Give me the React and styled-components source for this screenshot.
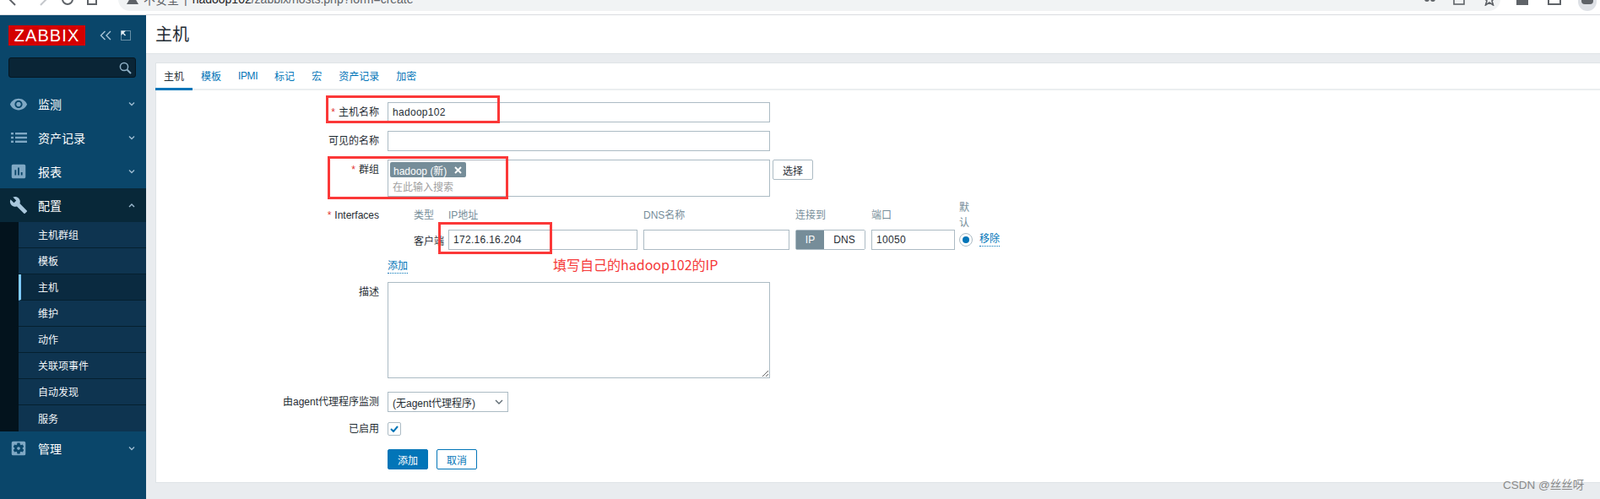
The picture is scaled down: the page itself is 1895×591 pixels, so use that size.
import React from "react";
import styled, { createGlobalStyle } from "styled-components";
import { MdVisibility, MdBuild, MdSettingsApplications, MdAssessment } from "react-icons/md";

const FONT = `"Liberation Sans", Arial, "Noto Sans CJK SC", sans-serif`;

const Global = createGlobalStyle`
  html, body { margin: 0; padding: 0; background: #e9ecef; }
  * { box-sizing: border-box; }
  body { font-family: ${FONT}; font-size: 12px; color: #1f2c33; }
`;

const Page = styled.div`
  position: relative;
  width: 1895px;
  height: 591px;
  overflow: hidden;
  display: flex;
  flex-direction: column;
`;

/* browser chrome */
const Chrome = styled.div`
  flex: none;
  height: 18px;
  background: #fff;
  border-bottom: 1px solid #dadce0;
  overflow: hidden;
`;
const ChromeRow = styled.div`
  height: 28px;
  margin-top: -15px;
  display: flex;
  align-items: center;
  color: #5f6368;
`;
const NavIcons = styled.div`
  width: 140px;
  flex: none;
  display: flex;
  align-items: center;
  padding-left: 8px;
  gap: 14px;
`;
const AddressPill = styled.div`
  width: 1637px;
  height: 28px;
  flex: none;
  background: #f1f3f4;
  border-radius: 14px;
  display: flex;
  align-items: center;
  padding: 0 5px 0 10px;
  font-size: 14px;
  color: #5f6368;
  gap: 6px;
`;
const Host = styled.span`color: #202124;`;
const PillEnd = styled.div`
  margin-left: auto;
  display: flex;
  align-items: center;
  gap: 20px;
`;
const ChromeEnd = styled.div`
  display: flex;
  align-items: center;
  gap: 22px;
  padding-left: 18px;
`;
const Avatar = styled.div`
  width: 22px;
  height: 28px;
  border-radius: 11px;
  background: #dee1e6;
  display: flex;
  align-items: center;
  justify-content: center;
  margin-left: -2px;
`;

const Body = styled.div`
  flex: 1;
  display: flex;
  min-height: 0;
`;

/* sidebar */
const Sidebar = styled.aside`
  width: 173px;
  flex: none;
  background: #0a466a;
  display: flex;
  flex-direction: column;
`;
const BrandRow = styled.div`
  display: flex;
  align-items: center;
  padding: 12px 0 0 10px;
  height: 36px;
`;
const Logo = styled.div`
  width: 91px;
  height: 24px;
  background: #d40000;
  color: #fff;
  font-size: 20px;
  line-height: 24px;
  text-align: center;
  letter-spacing: 1.1px;
`;
const BrandIcons = styled.div`
  display: flex;
  align-items: center;
  gap: 11px;
  margin-left: 17px;
`;
const SearchBox = styled.div`
  margin: 14px 12px 0 10px;
  height: 24px;
  background: #0a2536;
  border: 1px solid #051722;
  border-radius: 3px;
  display: flex;
  align-items: center;
  justify-content: flex-end;
  padding-right: 4px;
`;
const Nav = styled.nav`
  margin-top: 11px;
  display: flex;
  flex-direction: column;
`;
const NavItem = styled.div`
  height: 40px;
  display: flex;
  align-items: center;
  background: ${(p) => (p.$open ? "#082839" : "transparent")};
  color: #fff;
  font-size: 14px;
  padding-left: 11px;
`;
const NavIcon = styled.span`
  width: 22px;
  height: 22px;
  margin-right: 12px;
  display: flex;
  align-items: center;
  justify-content: center;
  color: ${(p) => (p.$open ? "#a9c7dc" : "#7fa8c4")};
`;
const NavLabel = styled.span`flex: 1;`;
const NavChevron = styled.svg`
  width: 8px;
  height: 6px;
  margin-right: 13px;
  fill: none;
  stroke: #9dbbd0;
  stroke-width: 1.4;
`;
const SubNav = styled.div`
  background: #03131d;
  padding-left: 22px;
  display: flex;
  flex-direction: column;
`;
const SubItem = styled.div`
  height: 31px;
  display: flex;
  align-items: center;
  padding-left: ${(p) => (p.$active ? "20px" : "23px")};
  padding-bottom: 1px;
  font-size: 12px;
  color: #f1f5f8;
  background: ${(p) => (p.$active ? "#0a2a40" : "#0e3450")};
  border-bottom: 1px solid #05202f;
  border-left: ${(p) => (p.$active ? "3px solid #7fccff" : "0")};
  &:last-child { border-bottom: 0; }
`;

/* main */
const Main = styled.main`
  flex: 1;
  min-width: 0;
  display: flex;
  flex-direction: column;
`;
const PageHeader = styled.header`
  height: 46px;
  flex: none;
  background: #fff;
  border-bottom: 1px solid #dfe4e7;
  display: flex;
  align-items: center;
  padding: 0 0 2px 11px;
  font-size: 20px;
  color: #1f2c33;
`;
const Content = styled.div`
  padding: 10px 0 0 11px;
`;
const Card = styled.section`
  background: #fff;
  border: 1px solid #dfe4e7;
  border-right: 0;
  height: 498px;
`;
const Tabs = styled.div`
  height: 32px;
  display: flex;
  border-bottom: 2px solid #ebeef0;
  margin-left: -1px;
`;
const Tab = styled.div`
  height: 32px;
  padding: 0 10px;
  display: flex;
  align-items: center;
  font-size: 12px;
  letter-spacing: ${(p) => (p.$latin ? "-0.4px" : "0")};
  color: ${(p) => (p.$active ? "#1f2c33" : "#0275b8")};
  border-bottom: 3px solid ${(p) => (p.$active ? "#0275b8" : "transparent")};
`;
const Form = styled.form`
  padding-top: 14px;
  display: flex;
  flex-direction: column;
`;
const Row = styled.div`
  display: grid;
  grid-template-columns: 265px 1fr;
  column-gap: 10px;
  margin-top: ${(p) => p.$gap ?? 10}px;
  margin-left: -1px;
`;
const Label = styled.label`
  text-align: right;
  font-size: 12px;
  line-height: ${(p) => p.$line ?? 24}px;
  color: #1f2c33;
`;
const Star = styled.span`color: #e33734; margin-right: 4px;`;
const Field = styled.input`
  display: block;
  width: 453px;
  height: 24px;
  border: 1px solid #acbbc4;
  padding: 0 5px;
  font: 12px ${FONT};
  letter-spacing: 0.3px;
  color: #1f2c33;
  background: #fff;
  outline: none;
`;
const GroupWrap = styled.div`
  display: flex;
  gap: 3px;
`;
const Multi = styled.div`
  width: 453px;
  height: 44px;
  border: 1px solid #acbbc4;
  padding: 2px 2px 2px 2px;
`;
const Chip = styled.div`
  width: 90px;
  height: 18px;
  background: #768d99;
  color: #fff;
  border-radius: 2px;
  font-size: 12px;
  display: flex;
  align-items: center;
  justify-content: space-between;
  padding: 0 5px 0 4px;
`;
const Placeholder = styled.div`
  color: #a0a0a0;
  padding: 4px 0 0 3px;
  line-height: 16px;
`;
const Button = styled.button`
  height: ${(p) => p.$h ?? 24}px;
  width: 48px;
  border-radius: 2px;
  font: 12px ${FONT};
  padding: 0;
  border: 1px solid ${(p) => p.$border};
  background: ${(p) => p.$bg ?? "#fff"};
  color: ${(p) => p.$color};
`;
const IfaceGrid = styled.div`
  display: grid;
  grid-template-columns: 41px 231px 180px 90px 104px 24px auto;
  justify-content: start;
  padding-left: 31px;
  align-items: center;
`;
const IfaceHead = styled.div`
  color: #768d99;
  line-height: 18px;
  align-self: ${(p) => (p.$tall ? "start" : "center")};
  width: ${(p) => (p.$tall ? "12px" : "auto")};
`;
const IfaceHeadRow = styled(IfaceGrid)`
  height: 35px;
  margin-top: -6px;
`;
const CellText = styled.div`color: #1f2c33;`;
const IpInput = styled(Field)`
  width: ${(p) => p.$w}px;
`;
const Toggle = styled.div`
  width: 83px;
  height: 24px;
  display: flex;
  border: 1px solid #acbbc4;
  border-radius: 2px;
`;
const ToggleOpt = styled.div`
  flex: ${(p) => p.$flex};
  display: flex;
  align-items: center;
  justify-content: center;
  background: ${(p) => (p.$on ? "#768d99" : "#fff")};
  color: ${(p) => (p.$on ? "#fff" : "#1f2c33")};
`;
const Radio = styled.div`
  width: 16px;
  height: 16px;
  border: 1px solid #acbbc4;
  border-radius: 50%;
  display: flex;
  align-items: center;
  justify-content: center;
  &::after {
    content: "";
    width: 8px;
    height: 8px;
    border-radius: 50%;
    background: #0275b8;
  }
`;
const TextLink = styled.a`
  color: #0275b8;
  border-bottom: 1px dotted #0275b8;
  line-height: 15px;
  display: inline-block;
`;
const AddLink = styled(TextLink)`
  margin-top: 12px;
`;
const Area = styled.textarea`
  display: block;
  width: 453px;
  height: 114px;
  border: 1px solid #acbbc4;
  padding: 5px;
  font: 12px ${FONT};
  resize: vertical;
  outline: none;
`;
const SelectBox = styled.div`
  width: 143px;
  height: 24px;
  border: 1px solid #acbbc4;
  display: flex;
  align-items: center;
  justify-content: space-between;
  padding: 0 5px;
  color: #1f2c33;
`;
const Check = styled.div`
  width: 16px;
  height: 16px;
  border: 1px solid #acbbc4;
  border-radius: 2px;
  display: flex;
  align-items: center;
  justify-content: center;
`;
const Actions = styled.div`
  display: flex;
  gap: 10px;
`;

/* annotations lying over the form */
const RedBox = styled.div`
  position: absolute;
  left: ${(p) => p.$x}px;
  top: ${(p) => p.$y}px;
  width: ${(p) => p.$w}px;
  height: ${(p) => p.$h}px;
  border: 3px solid #fb3838;
  pointer-events: none;
`;
const Note = styled.div`
  position: absolute;
  left: 655px;
  top: 301px;
  font-size: 16px;
  line-height: 24px;
  font-family: "Noto Sans CJK SC", "Liberation Sans", sans-serif;
  color: #f53a3a;
  white-space: nowrap;
`;
const Watermark = styled.div`
  position: absolute;
  left: 1780px;
  top: 566px;
  font-size: 13.5px;
  line-height: 18px;
  color: #8a8a8a;
  white-space: nowrap;
`;

const Chevron = ({ up }) => (
  <NavChevron viewBox="0 0 8 6">
    <polyline points={up ? "1,5 4,2 7,5" : "1,1.5 4,4.5 7,1.5"} />
  </NavChevron>
);

const ListIcon = () => (
  <svg width="19" height="12" viewBox="0 0 19 12" fill="#7fa8c4">
    <rect x="0" y="0" width="3" height="2.4" />
    <rect x="5" y="0" width="14" height="2.4" />
    <rect x="0" y="4.8" width="3" height="2.4" />
    <rect x="5" y="4.8" width="14" height="2.4" />
    <rect x="0" y="9.6" width="3" height="2.4" />
    <rect x="5" y="9.6" width="14" height="2.4" />
  </svg>
);

const items = [
  ["主机群组"],
  ["模板"],
  ["主机", true],
  ["维护"],
  ["动作"],
  ["关联项事件"],
  ["自动发现"],
  ["服务"],
];

const tabs = ["主机", "模板", "IPMI", "标记", "宏", "资产记录", "加密"];

export default function App() {
  return (
    <Page>
      <Global />
      <Chrome>
        <ChromeRow>
          <NavIcons>
            <svg width="12" height="16" viewBox="0 0 12 16" fill="none" stroke="#5f6368" strokeWidth="2"><polyline points="10,1 3,8 10,15" /></svg>
            <svg width="12" height="16" viewBox="0 0 12 16" fill="none" stroke="#c4c7cb" strokeWidth="2" style={{ marginLeft: 12 }}><polyline points="2,1 9,8 2,15" /></svg>
            <svg width="16" height="16" viewBox="0 0 16 16" fill="none" stroke="#5f6368" strokeWidth="2"><circle cx="8" cy="8" r="6" /></svg>
            <svg width="14" height="16" viewBox="0 0 14 16" fill="none" stroke="#5f6368" strokeWidth="2"><rect x="2" y="3" width="10" height="11" /></svg>
          </NavIcons>
          <AddressPill>
            <svg width="14" height="14" viewBox="0 0 14 14" fill="#5f6368"><polygon points="7,1 14,13 0,13" /></svg>
            <span>不安全</span>
            <span>|</span>
            <span><Host>hadoop102</Host>/zabbix/hosts.php?form=create</span>
            <PillEnd>
              <svg width="14" height="14" viewBox="0 0 14 14" fill="#5f6368"><circle cx="4" cy="7" r="3" /><circle cx="11" cy="7" r="3" /></svg>
              <svg width="16" height="16" viewBox="0 0 16 16" fill="none" stroke="#5f6368" strokeWidth="1.6"><rect x="2" y="2" width="12" height="12" /></svg>
              <svg width="16" height="16" viewBox="0 0 16 16" fill="none" stroke="#5f6368" strokeWidth="1.6"><polygon points="8,1 10,6 15,6 11,10 12.5,15 8,12 3.5,15 5,10 1,6 6,6" /></svg>
            </PillEnd>
          </AddressPill>
          <ChromeEnd>
            <svg width="16" height="16" viewBox="0 0 16 16" fill="#5f6368"><rect x="1" y="3" width="14" height="12" /></svg>
            <svg width="16" height="16" viewBox="0 0 16 16" fill="none" stroke="#5f6368" strokeWidth="2"><rect x="1" y="2" width="14" height="12" /></svg>
            <Avatar>
              <svg width="14" height="16" viewBox="0 0 14 16" fill="#5f6368"><rect x="0" y="2" width="14" height="12" rx="4" /></svg>
            </Avatar>
          </ChromeEnd>
        </ChromeRow>
      </Chrome>
      <Body>
        <Sidebar>
          <BrandRow>
            <Logo>ZABBIX</Logo>
            <BrandIcons>
              <svg width="14" height="12" viewBox="0 0 14 12" fill="none" stroke="#a9c4d6" strokeWidth="1.4"><polyline points="6.5,1 1.5,6 6.5,11" /><polyline points="13,1 8,6 13,11" /></svg>
              <svg width="12" height="12" viewBox="0 0 12 12" fill="none" stroke="#c7d9e5" strokeWidth="1" strokeDasharray="1 1"><rect x="0.5" y="0.5" width="11" height="11" /><polygon points="0.5,0.5 6,0.5 3.5,3 6,5.5 5,6.5 2.5,4 0.5,6" fill="#e6eff5" stroke="none" /></svg>
            </BrandIcons>
          </BrandRow>
          <SearchBox>
            <svg width="15" height="15" viewBox="0 0 15 15" fill="none" stroke="#8fb0c6" strokeWidth="1.5"><circle cx="6" cy="6" r="4.6" /><line x1="9.5" y1="9.5" x2="14" y2="14" strokeWidth="2" /></svg>
          </SearchBox>
          <Nav>
            <NavItem>
              <NavIcon><MdVisibility size={27} /></NavIcon>
              <NavLabel>监测</NavLabel>
              <Chevron />
            </NavItem>
            <NavItem>
              <NavIcon><ListIcon /></NavIcon>
              <NavLabel>资产记录</NavLabel>
              <Chevron />
            </NavItem>
            <NavItem>
              <NavIcon><MdAssessment size={24} /></NavIcon>
              <NavLabel>报表</NavLabel>
              <Chevron />
            </NavItem>
            <NavItem $open>
              <NavIcon $open><MdBuild size={22} /></NavIcon>
              <NavLabel>配置</NavLabel>
              <Chevron up />
            </NavItem>
            <SubNav>
              {items.map(([t, active]) => (
                <SubItem key={t} $active={active}>{t}</SubItem>
              ))}
            </SubNav>
            <NavItem>
              <NavIcon><MdSettingsApplications size={24} /></NavIcon>
              <NavLabel>管理</NavLabel>
              <Chevron />
            </NavItem>
          </Nav>
        </Sidebar>
        <Main>
          <PageHeader>主机</PageHeader>
          <Content>
            <Card>
              <Tabs>
                {tabs.map((t, i) => (
                  <Tab key={t} $active={i === 0} $latin={t === "IPMI"}>{t}</Tab>
                ))}
              </Tabs>
              <Form>
                <Row $gap={0}>
                  <Label><Star>*</Star>主机名称</Label>
                  <Field defaultValue="hadoop102" />
                </Row>
                <Row>
                  <Label>可见的名称</Label>
                  <Field />
                </Row>
                <Row>
                  <Label><Star>*</Star>群组</Label>
                  <GroupWrap>
                    <Multi>
                      <Chip>
                        <span>hadoop (新)</span>
                        <svg width="9" height="9" viewBox="0 0 9 9" stroke="#fff" strokeWidth="2"><line x1="1" y1="1" x2="8" y2="8" /><line x1="8" y1="1" x2="1" y2="8" /></svg>
                      </Chip>
                      <Placeholder>在此输入搜索</Placeholder>
                    </Multi>
                    <Button $border="#acbbc4" $color="#1f2c33">选择</Button>
                  </GroupWrap>
                </Row>
                <Row>
                  <Label><Star>*</Star>Interfaces</Label>
                  <div>
                    <IfaceHeadRow>
                      <IfaceHead>类型</IfaceHead>
                      <IfaceHead>IP地址</IfaceHead>
                      <IfaceHead>DNS名称</IfaceHead>
                      <IfaceHead>连接到</IfaceHead>
                      <IfaceHead>端口</IfaceHead>
                      <IfaceHead $tall>默认</IfaceHead>
                    </IfaceHeadRow>
                    <IfaceGrid>
                      <CellText>客户端</CellText>
                      <IpInput $w={224} defaultValue="172.16.16.204" />
                      <IpInput $w={173} />
                      <Toggle>
                        <ToggleOpt $on $flex="0 0 33px">IP</ToggleOpt>
                        <ToggleOpt $flex="1">DNS</ToggleOpt>
                      </Toggle>
                      <IpInput $w={99} defaultValue="10050" />
                      <Radio />
                      <TextLink>移除</TextLink>
                    </IfaceGrid>
                    <AddLink>添加</AddLink>
                  </div>
                </Row>
                <Row $gap={10}>
                  <Label>描述</Label>
                  <Area />
                </Row>
                <Row $gap={16}>
                  <Label>由agent代理程序监测</Label>
                  <SelectBox>
                    <span>(无agent代理程序)</span>
                    <svg width="10" height="7" viewBox="0 0 10 7" fill="none" stroke="#5f6b73" strokeWidth="1.4"><polyline points="1,1 5,5 9,1" /></svg>
                  </SelectBox>
                </Row>
                <Row $gap={12}>
                  <Label $line={16}>已启用</Label>
                  <Check>
                    <svg width="10" height="8" viewBox="0 0 10 8" fill="none" stroke="#0275b8" strokeWidth="2"><polyline points="1,4 4,7 9,1" /></svg>
                  </Check>
                </Row>
                <Row $gap={16}>
                  <span />
                  <Actions>
                    <Button $bg="#0275b8" $border="#0275b8" $color="#fff">添加</Button>
                    <Button $border="#0275b8" $color="#0275b8">取消</Button>
                  </Actions>
                </Row>
              </Form>
            </Card>
          </Content>
        </Main>
      </Body>
      <RedBox $x={386} $y={113} $w={206} $h={33} />
      <RedBox $x={388} $y={185} $w={214} $h={51} />
      <RedBox $x={519} $y={263} $w={135} $h={38} />
      <Note>填写自己的hadoop102的IP</Note>
      <Watermark>CSDN @丝丝呀</Watermark>
    </Page>
  );
}
